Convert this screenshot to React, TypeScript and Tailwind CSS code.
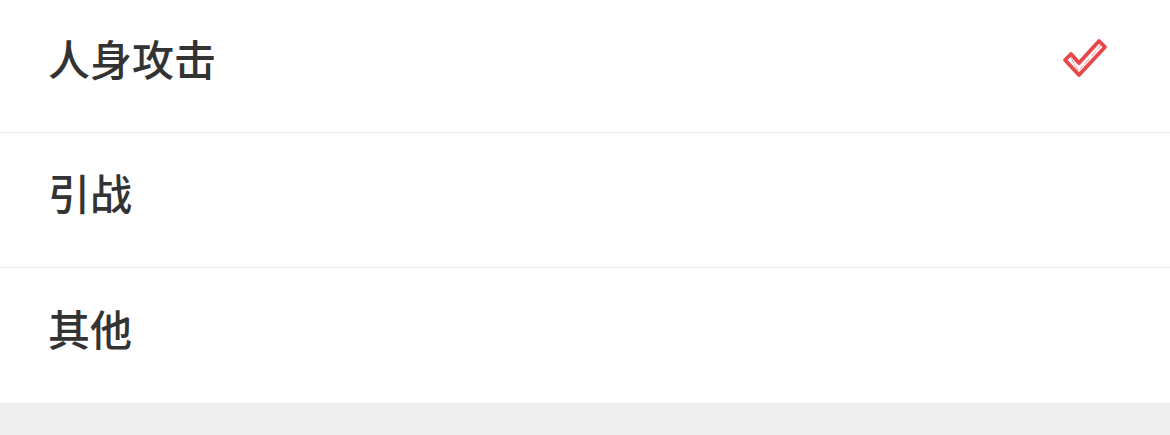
import React from "react";

function Check() {
  return (
    <svg width="46" height="42" viewBox="0 0 46 42" fill="none">
      <path
        d="M3 22 L9 16 L17 25 L37 3 L43 9 L17 37 Z"
        fill="#fffafa"
        stroke="#e8474a"
        strokeWidth="3.8"
        strokeLinejoin="round"
      />
      <g stroke="#f29a9c" strokeWidth="1" strokeLinecap="round">
        <path d="M9 20 L12 25" />
        <path d="M12 26 L15 30" />
        <path d="M15 30 L16 33" />
        <path d="M18 31 L21 28" />
        <path d="M23 26 L27 21" />
        <path d="M30 18 L34 13" />
        <path d="M36 11 L39 7" />
      </g>
    </svg>
  );
}

const font = { fontFamily: '"Noto Sans CJK SC", sans-serif' };

function Row({ label, checked, h }: { label: string; checked?: boolean; h: string }) {
  return (
    <div className={`flex ${h} items-center justify-between border-b border-[#ebebeb] pl-[48px] pr-[62px]`}>
      <span className="text-[42px] font-medium leading-none text-[#333333] -mt-[16px]" style={font}>
        {label}
      </span>
      {checked && (
        <div className="-mt-[14px]">
          <Check />
        </div>
      )}
    </div>
  );
}

export default function App() {
  return (
    <div className="w-[1170px] h-[435px] bg-[#efefef]">
      <div className="bg-white flex flex-col">
        <Row label="人身攻击" checked h="h-[133px]" />
        <Row label="引战" h="h-[135px]" />
        <Row label="其他" h="h-[136px]" />
      </div>
    </div>
  );
}
